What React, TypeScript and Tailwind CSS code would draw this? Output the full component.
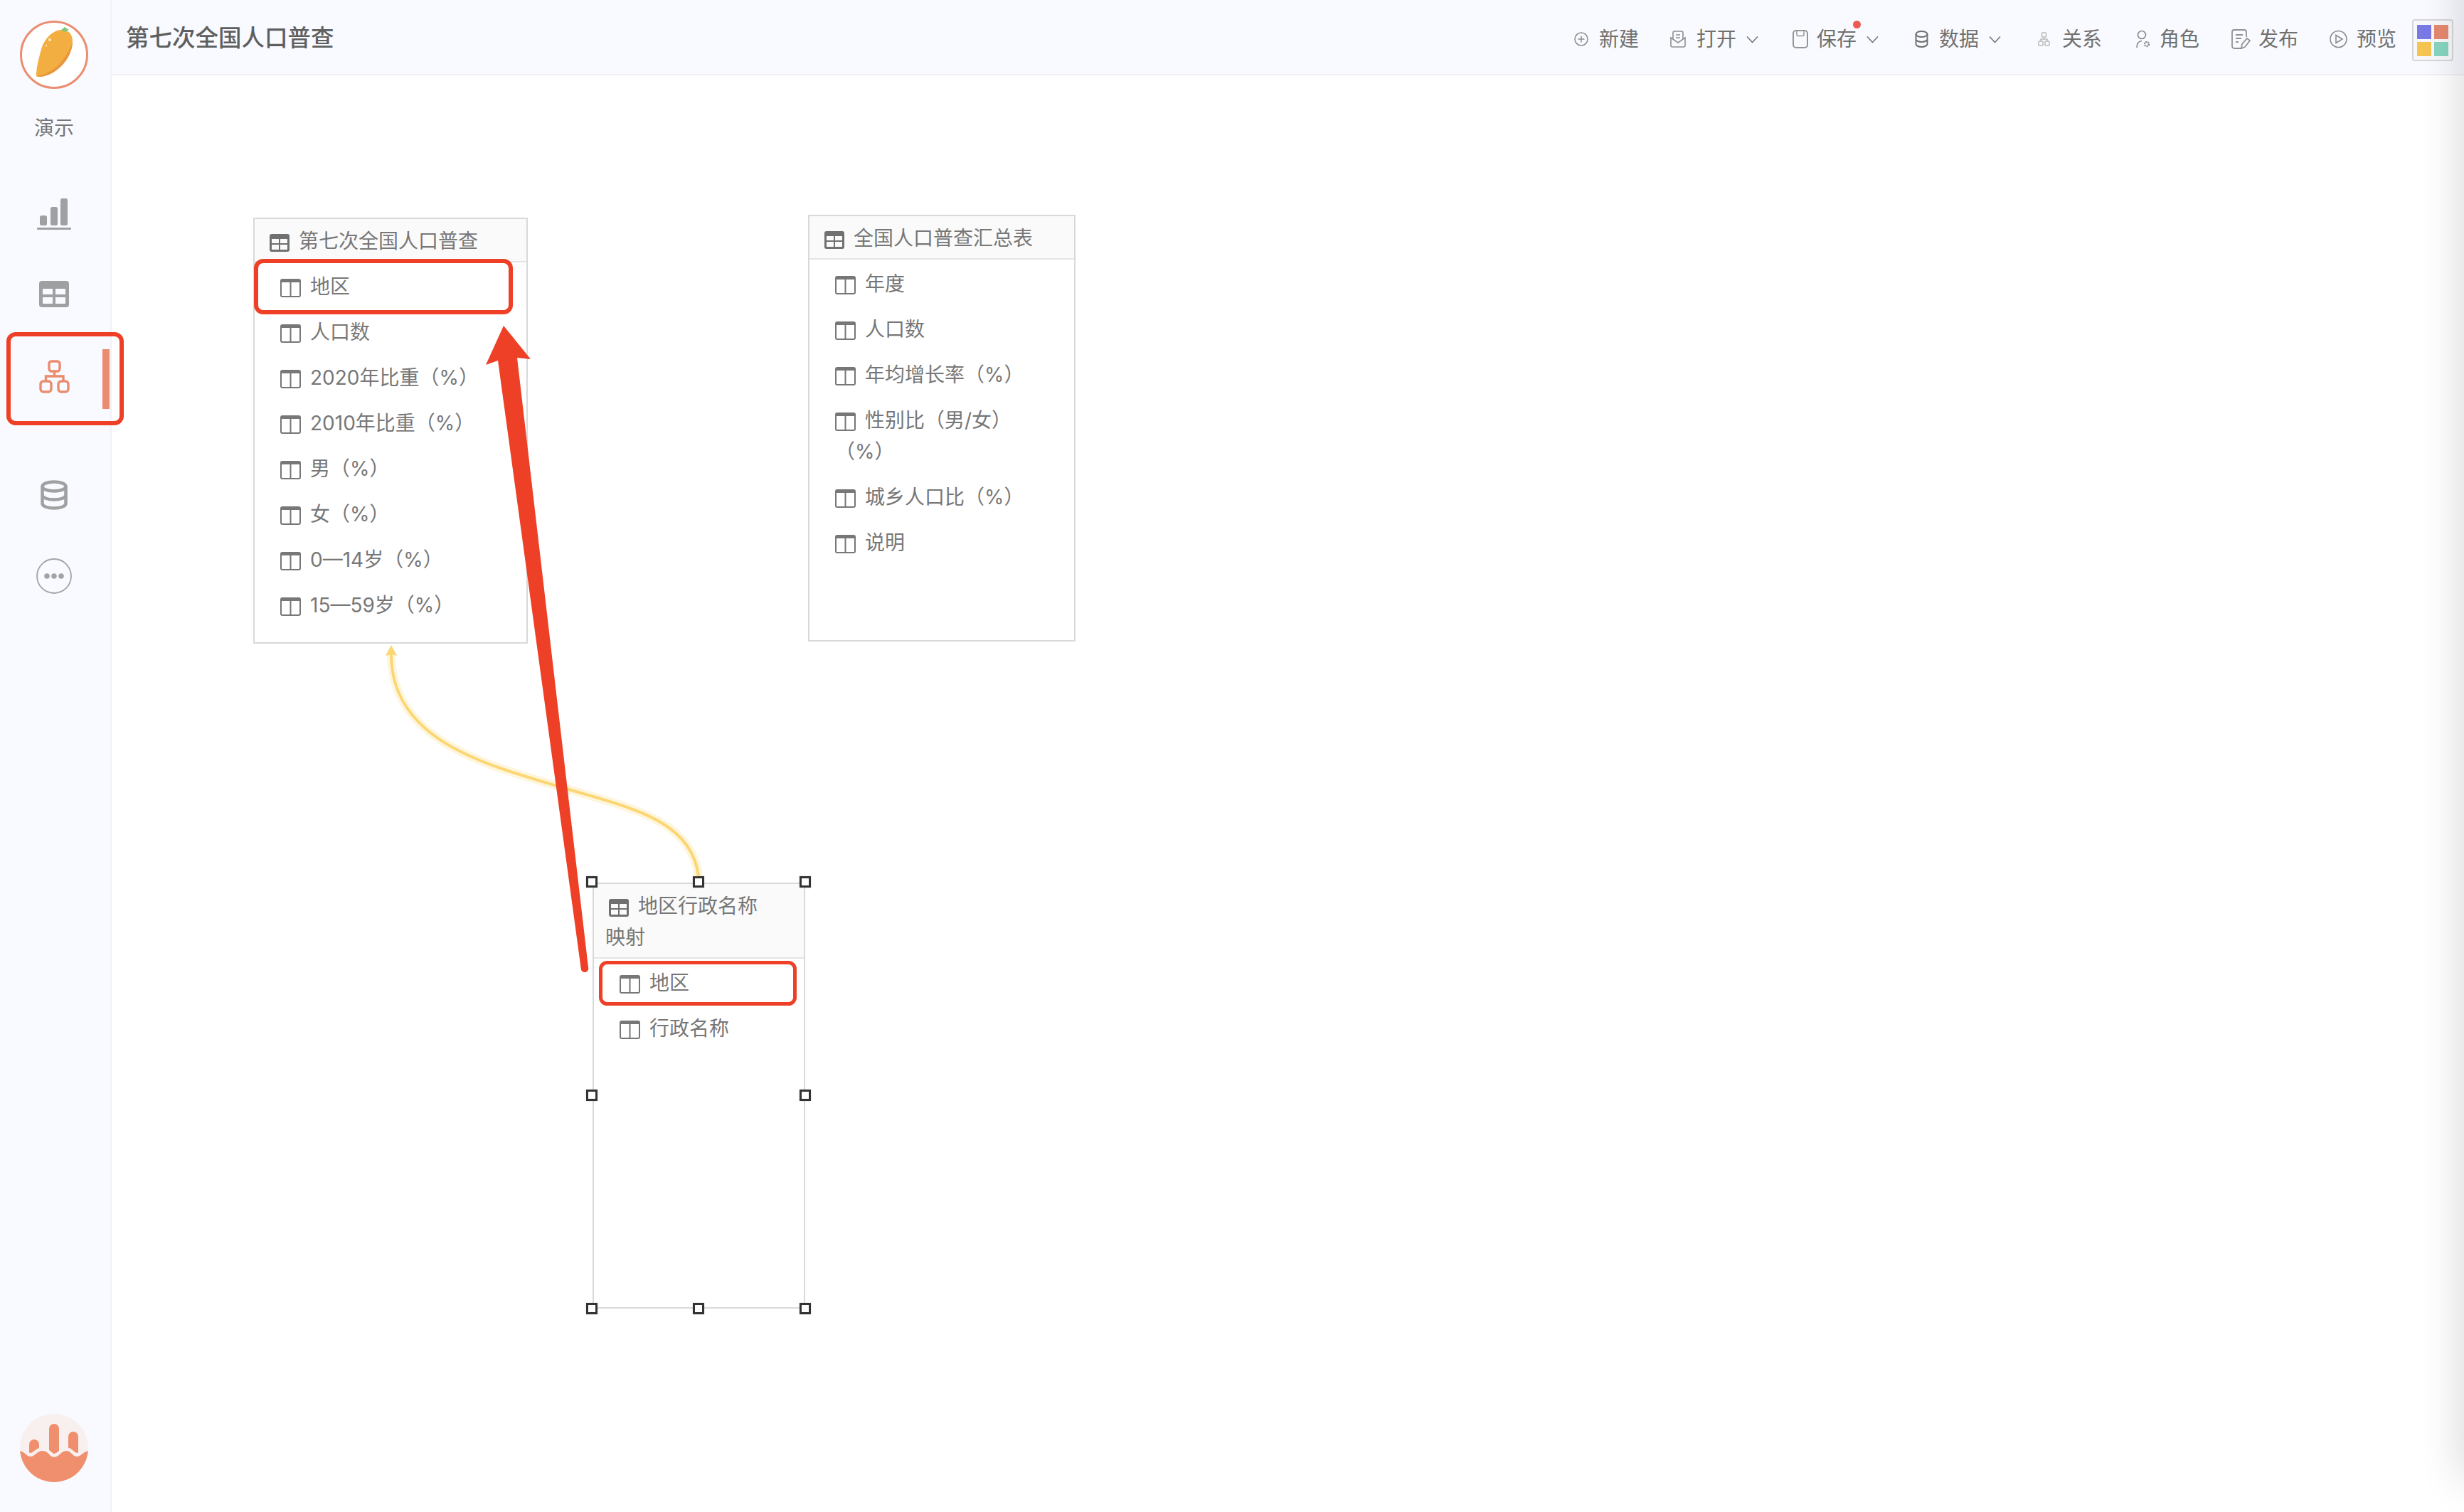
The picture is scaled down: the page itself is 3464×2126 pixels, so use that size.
import type { ReactNode } from 'react';

// icon set, drawn to match the screenshot
function TableIcon() {
  return (
    <svg width="28" height="25" viewBox="0 0 28 25" className="inline-block align-[-5px] ml-[5px] mr-[13px]">
      <rect width="28" height="25" rx="3" fill="#707070" />
      <rect x="3" y="7" width="10" height="6" fill="#fafafa" />
      <rect x="15" y="7" width="10" height="6" fill="#fafafa" />
      <rect x="3" y="15" width="10" height="7" fill="#fafafa" />
      <rect x="15" y="15" width="10" height="7" fill="#fafafa" />
    </svg>
  );
}

function ColumnIcon() {
  return (
    <svg width="29" height="26" viewBox="0 0 29 26" className="inline-block align-[-5px] mr-[13px]">
      <rect x="1" y="1" width="27" height="24" rx="2" fill="none" stroke="#777" strokeWidth="2" />
      <rect x="1" y="1" width="27" height="4" fill="#777" />
      <rect x="13.5" y="2" width="2" height="23" fill="#777" />
    </svg>
  );
}

function Chevron() {
  return (
    <svg width="17" height="11" viewBox="0 0 17 11" className="ml-[14px]">
      <path d="M1 1.5 8.5 9.5 16 1.5" fill="none" stroke="#777" strokeWidth="1.6" />
    </svg>
  );
}

function Mango() {
  return (
    <svg width="96" height="96" viewBox="0 0 96 96">
      <circle cx="48" cy="48" r="46.5" fill="#fff" stroke="#ea8d70" strokeWidth="3" />
      <path d="M23 78C23 66 26 55 29 44C32 30 40 19 52 14C62 11 74 14 74 29C74 43 66 59 51 70C43 76 30 81 23 78Z" fill="#f3ae42" />
      <path d="M23 78C34 77 49 69 58 58C66 48 72 38 74 29C74 43 66 59 51 70C43 76 30 81 23 78Z" fill="#e9973d" />
      <path d="M58 13 63 9 69 13 63 16Z" fill="#85c77c" />
      <circle cx="42" cy="27" r="2" fill="#fde9bf" />
      <circle cx="37" cy="35" r="1.2" fill="#fde9bf" />
    </svg>
  );
}

function WaveLogo() {
  return (
    <svg width="96" height="96" viewBox="0 0 96 96">
      <defs>
        <clipPath id="wave-clip">
          <circle cx="48" cy="48" r="48" />
        </clipPath>
      </defs>
      <g clipPath="url(#wave-clip)">
        <rect width="96" height="96" fill="#f8efef" />
        <path d="M13 60V43a7 7 0 0 1 14 0V50Z" fill="#ef8f6e" />
        <path d="M41 60V21a7 7 0 0 1 14 0V60Z" fill="#ef8f6e" />
        <path d="M68 50V32a7 7 0 0 1 14 0V60Z" fill="#ef8f6e" />
        <path d="M0 52C8 54 9 60 15 60C21 60 24 52 32 52C40 52 42 61 48 61C55 61 58 52 65 52C72 52 74 60 80 60C86 60 88 54 96 52" fill="none" stroke="#f8efef" strokeWidth="6" transform="translate(0 -2)" />
        <path d="M0 52C8 54 9 60 15 60C21 60 24 52 32 52C40 52 42 61 48 61C55 61 58 52 65 52C72 52 74 60 80 60C86 60 88 54 96 52V96H0Z" fill="#ef8f6e" />
      </g>
    </svg>
  );
}

function Sidebar() {
  return (
    <aside className="w-[157px] shrink-0 h-full flex flex-col items-center bg-[#f8faff] border-r-2 border-[#f1f2f5] pr-[3px]">
      <div className="mt-[29px] h-[96px]">
        <Mango />
      </div>
      <div className="mt-[37px] text-[28px] leading-[36px] text-[#777]">演示</div>
      <svg width="48" height="44" viewBox="0 0 48 44" className="mt-[81px]">
        <rect x="4" y="24" width="10" height="14" rx="2.5" fill="#9fa0a2" />
        <rect x="19" y="12" width="10" height="26" rx="2.5" fill="#9fa0a2" />
        <rect x="33" y="0" width="10" height="38" rx="2.5" fill="#9fa0a2" />
        <rect x="0" y="41" width="48" height="3" rx="1" fill="#9fa0a2" />
      </svg>
      <svg width="42" height="37" viewBox="0 0 42 37" className="mt-[72px]">
        <rect width="42" height="37" rx="4" fill="#9fa0a2" />
        <rect x="5" y="11" width="14" height="8" fill="#f8faff" />
        <rect x="23" y="11" width="14" height="8" fill="#f8faff" />
        <rect x="5" y="23" width="14" height="9" fill="#f8faff" />
        <rect x="23" y="23" width="14" height="9" fill="#f8faff" />
      </svg>
      <div className="relative mt-[74px] w-[43px] h-[47px]">
        <svg width="43" height="47" viewBox="0 0 43 47" fill="none" stroke="#e98c6f" strokeWidth="3.4">
          <rect x="14" y="2" width="15" height="14" rx="3.5" />
          <rect x="2" y="30" width="15" height="15" rx="4" />
          <rect x="27" y="30" width="14" height="15" rx="4" />
          <path d="M21.5 16V23M9.5 30V23H34V30" />
        </svg>
        <div className="absolute left-[89px] top-[-15px] w-[10px] h-[84px] bg-[#e98c6f]" />
      </div>
      <svg width="38" height="42" viewBox="0 0 38 42" className="mt-[122px]" fill="none" stroke="#9fa0a2" strokeWidth="4.5">
        <ellipse cx="19" cy="9" rx="16.5" ry="6.5" />
        <path d="M2.5 9V33C2.5 37 10 39.5 19 39.5S35.5 37 35.5 33V9M2.5 21C2.5 25 10 27.5 19 27.5S35.5 25 35.5 21" />
      </svg>
      <svg width="50" height="50" viewBox="0 0 50 50" className="mt-[68px]">
        <circle cx="25" cy="25" r="24" fill="none" stroke="#a3a3a5" strokeWidth="1.8" />
        <circle cx="15" cy="25" r="3.8" fill="#a3a3a5" />
        <circle cx="25" cy="25" r="3.8" fill="#a3a3a5" />
        <circle cx="35" cy="25" r="3.8" fill="#a3a3a5" />
      </svg>
      <div className="mt-auto mb-[42px] h-[96px]">
        <WaveLogo />
      </div>
    </aside>
  );
}

function Action({ icon, label, className, chevron, dot }: { icon: ReactNode; label: string; className: string; chevron?: boolean; dot?: boolean }) {
  return (
    <div className={`relative flex items-center ${className}`}>
      {icon}
      <span className="relative text-[28px] leading-[40px] text-[#707070]">
        {label}
        {dot && <span className="absolute right-[-6px] top-[-6px] w-[11px] h-[11px] rounded-full bg-[#ee5a52]" />}
      </span>
      {chevron && <Chevron />}
    </div>
  );
}

function Header() {
  return (
    <header className="h-[106px] shrink-0 flex items-center justify-between bg-[#f8faff] border-b-2 border-[#f1f1f3] pl-[20px] pr-[15px]">
      <h1 className="text-[32.5px] leading-[44px] font-medium text-[#5f5f5f] mt-[4px]">第七次全国人口普查</h1>
      <div className="flex items-center mt-[6px]">
        <Action
          label="新建"
          className=""
          icon={
            <svg width="20" height="20" viewBox="0 0 20 20" className="mr-[15px]" fill="none" stroke="#8c8c8c" strokeWidth="1.5">
              <circle cx="10" cy="10" r="9" />
              <path d="M10 5.5V14.5M5.5 10H14.5" />
            </svg>
          }
        />
        <Action
          label="打开"
          className="ml-[44px]"
          chevron
          icon={
            <svg width="22" height="24" viewBox="0 0 22 24" className="mr-[15px]" fill="none" stroke="#8f8f8f" strokeWidth="1.6">
              <path d="M1 10V21a2 2 0 0 0 2 2H19a2 2 0 0 0 2-2V10L11 17Z" />
              <path d="M4 12V3a2 2 0 0 1 2-2H16a2 2 0 0 1 2 2V12M8 6H14M8 10H14" />
            </svg>
          }
        />
        <Action
          label="保存"
          className="ml-[48px]"
          chevron
          dot
          icon={
            <svg width="22" height="26" viewBox="0 0 22 26" className="mr-[12px]" fill="none" stroke="#959595" strokeWidth="2">
              <rect x="1" y="1" width="20" height="24" rx="4" />
              <path d="M6 1V7a1.5 1.5 0 0 0 1.5 1.5H14.500A1.500 1.500 0 0 0 16 7V1" strokeWidth="1.500" />
            </svg>
          }
        />
        <Action
          label="数据"
          className="ml-[51px]"
          chevron
          icon={
            <svg width="19" height="24" viewBox="0 0 19 24" className="mr-[15px]" fill="none" stroke="#6f6f6f" strokeWidth="2">
              <ellipse cx="9.500" cy="5" rx="8" ry="4" />
              <path d="M1.500 5V19C1.500 21 5 23 9.500 23S17.500 21 17.500 19V5M1.500 12C1.500 14 5 16 9.500 16S17.500 14 17.500 12" />
            </svg>
          }
        />
        <Action
          label="关系"
          className="ml-[52px]"
          icon={
            <svg width="17" height="20" viewBox="0 0 17 20" className="mr-[17px]" fill="none" stroke="#b9b9b9" strokeWidth="1.500">
              <rect x="5.500" y="1" width="6" height="6" rx="1" />
              <rect x="1" y="13" width="6" height="6" rx="1" />
              <rect x="10" y="13" width="6" height="6" rx="1" />
              <path d="M8.500 7V10M4 13V10H13V13" />
            </svg>
          }
        />
        <Action
          label="角色"
          className="ml-[48px]"
          icon={
            <svg width="20" height="26" viewBox="0 0 20 26" className="mr-[13px]" fill="none" stroke="#8a8a8a" strokeWidth="1.600">
              <circle cx="8" cy="7" r="5.500" />
              <path d="M1 25C1 19 4 16 8 15.500" />
              <circle cx="15" cy="20" r="3" strokeWidth="2.400" strokeDasharray="2 1" />
            </svg>
          }
        />
        <Action
          label="发布"
          className="ml-[45px]"
          icon={
            <svg width="27" height="28" viewBox="0 0 27 28" className="mr-[11px]" fill="none" stroke="#929292" strokeWidth="1.800">
              <path d="M15 27H4a3 3 0 0 1-3-3V4a3 3 0 0 1 3-3H18a3 3 0 0 1 3 3V11" />
              <path d="M6 8H16M6 13H14M6 18H10" />
              <path d="M14 27 15 21 22 13 26 16 19 25Z" />
            </svg>
          }
        />
        <Action
          label="预览"
          className="ml-[44px]"
          icon={
            <svg width="25" height="26" viewBox="0 0 25 26" className="mr-[13px]" fill="none" stroke="#8c8c8c" strokeWidth="1.600">
              <circle cx="12.500" cy="13" r="11.500" />
              <path d="M9 7.500 18 13 9 18.500Z" />
            </svg>
          }
        />
        <div className="ml-[22px] w-[58px] h-[59px] translate-y-[1px] border-2 border-[#d6d6d8] rounded-[4px] bg-[#f8f8fb] grid grid-cols-2 gap-[4px] px-[5px] pt-[6px] pb-[5px]">
          <div className="bg-[#7a7ae6]" />
          <div className="bg-[#e58a70]" />
          <div className="bg-[#f5c550]" />
          <div className="bg-[#86d5c0]" />
        </div>
      </div>
    </header>
  );
}

function TableNode({ name, fields, className }: { name: string; fields: string[]; className: string }) {
  return (
    <div className={`absolute overflow-hidden bg-white border-2 border-[#d9d9d9] text-[28px] leading-[44px] text-[#777] ${className}`}>
      <div className="bg-[#fafafa] border-b-2 border-[#e4e4e4] pl-[16px] pr-[40px] pt-[9px] pb-[6px]">
        <TableIcon />
        {name}
      </div>
      {fields.map((field) => (
        <div key={field} className="pl-[36px] pr-[36px] pt-[12px] pb-[8px] [&:nth-child(10)]:pt-[15px]">
          <ColumnIcon />
          {field}
        </div>
      ))}
    </div>
  );
}

function Handle({ className }: { className: string }) {
  return <div className={`absolute w-[16px] h-[16px] bg-white border-[3px] border-[#333] shadow-[0_0_2px_#0003] ${className}`} />;
}

const censusFields = ['地区', '人口数', '2020年比重（%）', '2010年比重（%）', '男（%）', '女（%）', '0—14岁（%）', '15—59岁（%）', '60岁及以上（%）'];
const summaryFields = ['年度', '人口数', '年均增长率（%）', '性别比（男/女）（%）', '城乡人口比（%）', '说明'];

function Annotations() {
  return (
    <svg width="3464" height="2126" viewBox="0 0 3464 2126" className="absolute left-0 top-0 pointer-events-none" fill="none">
      {/* relation line */}
      <path d="M982 1232C972 1150 880 1135 790 1107C680 1075 550 1040 550 920" stroke="#fbd875" strokeOpacity="0.25" strokeWidth="12" />
      <path d="M982 1232C972 1150 880 1135 790 1107C680 1075 550 1040 550 920" stroke="#fbd672" strokeWidth="4" />
      <path d="M550 907 558 922 550 920 542 922Z" fill="#fbd672" />
      {/* red markup */}
      <rect x="12" y="470" width="159" height="125" rx="10" stroke="#ee4026" strokeWidth="6" />
      <rect x="360" y="367" width="358" height="72" rx="10" stroke="#ee4026" strokeWidth="6" />
      <rect x="844.500" y="1353.500" width="273" height="58" rx="9" stroke="#ee4026" strokeWidth="5" />
      <path d="M708 458 746 505 727 503 827 1360a5 5 0 0 1-10 3.500L700 507 683 513Z" fill="#ee4026" />
    </svg>
  );
}

export default function App() {
  return (
    <div className="relative w-[3464px] h-[2126px] flex overflow-hidden bg-white font-['Inter','Noto_Sans_CJK_SC','Noto_Sans',sans-serif]">
      <Sidebar />
      <div className="flex-1 flex flex-col min-w-0">
        <Header />
        <main className="relative flex-1">
          <TableNode name="第七次全国人口普查" fields={censusFields} className="left-[199px] top-[200px] w-[386px] h-[599px]" />
          <TableNode name="全国人口普查汇总表" fields={summaryFields} className="left-[979px] top-[196px] w-[376px] h-[600px]" />
          <TableNode name="地区行政名称映射" fields={['地区', '行政名称']} className="left-[676px] top-[1135px] w-[299px] h-[599px]" />
          <Handle className="left-[667px] top-[1126px]" />
          <Handle className="left-[817px] top-[1126px]" />
          <Handle className="left-[967px] top-[1126px]" />
          <Handle className="left-[667px] top-[1426px]" />
          <Handle className="left-[967px] top-[1426px]" />
          <Handle className="left-[667px] top-[1726px]" />
          <Handle className="left-[817px] top-[1726px]" />
          <Handle className="left-[967px] top-[1726px]" />
        </main>
      </div>
      <Annotations />
      {/* shadow of a panel parked just past the right edge */}
      <div className="absolute left-full top-[-100px] w-[40px] h-[2180px] shadow-[0_0_60px_rgba(0,0,0,0.2)] pointer-events-none" />
    </div>
  );
}
